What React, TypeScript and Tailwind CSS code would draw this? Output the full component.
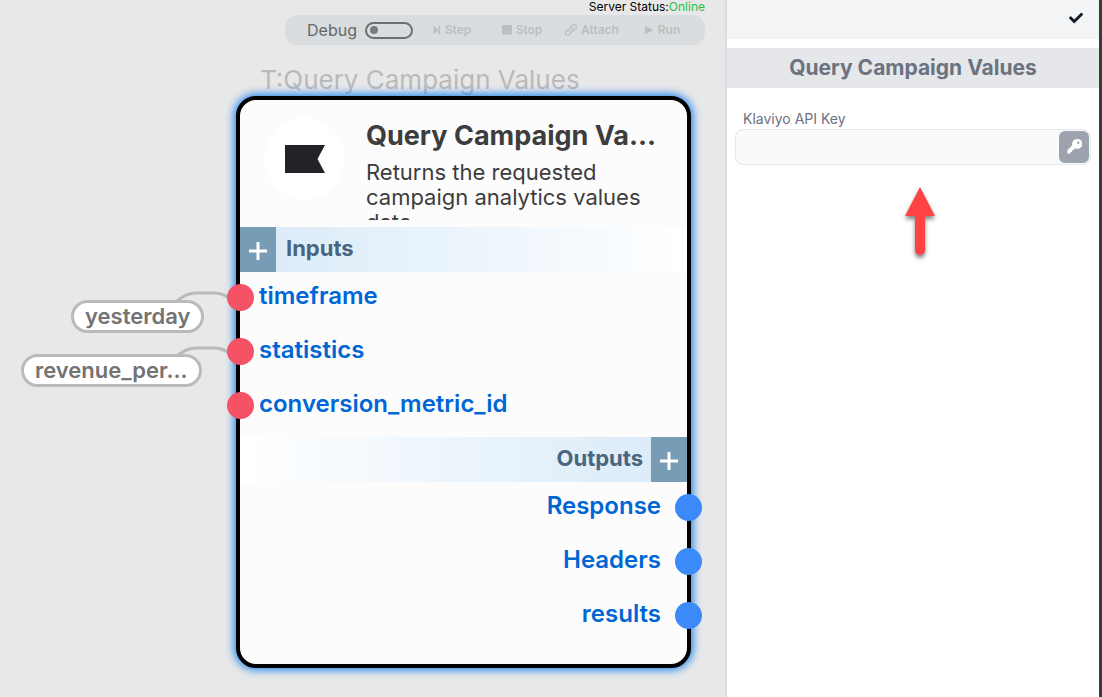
import { useState } from "react";
import type { ReactNode } from "react";
import { FaCheck, FaKey } from "react-icons/fa";

const inputs = ["timeframe", "statistics", "conversion_metric_id"];
const outputs = ["Response", "Headers", "results"];

function ToolButton({ icon, label }: { icon: ReactNode; label: string }) {
  return (
    <button type="button" disabled className="flex w-[70px] items-center justify-center gap-1 text-xs font-semibold text-[#bcbebf]">
      {icon}
      {label}
    </button>
  );
}

function Toolbar() {
  const [debug, setDebug] = useState(false);
  return (
    <header className="ml-auto flex w-[420px] flex-col">
      <p className="flex h-[14px] items-center justify-end text-xs text-black">
        Server Status:<span className="text-[#1fc14a]">Online</span>
      </p>
      <div className="mt-px flex h-[30px] items-center justify-between rounded-[12px] bg-[#d9dde0] pr-2 pl-[22px]">
        <label className="flex items-center gap-2 text-base text-[#666]">
          Debug
          <input type="checkbox" checked={debug} onChange={() => setDebug(!debug)} className="peer sr-only" />
          <span className="flex h-[17px] w-12 items-center rounded-full border-2 border-[#6f6f6f] px-[3px] peer-checked:justify-end">
            <span className="size-2 rounded-full bg-[#7c7c7c]" />
          </span>
        </label>
        <div className="flex">
          <ToolButton
            label="Step"
            icon={
              <svg viewBox="0 0 8 10" className="h-[10px] w-2" fill="currentColor">
                <path d="M0.500 0.500 5.500 5 0.500 9.500ZM5.500 0.500H7.100V9.500H5.500Z" />
              </svg>
            }
          />
          <ToolButton
            label="Stop"
            icon={
              <svg viewBox="0 0 10 10" className="size-[10px]" fill="currentColor">
                <path d="M0 0H10V9.500H0Z" />
              </svg>
            }
          />
          <ToolButton
            label="Attach"
            icon={
              <svg viewBox="0 0 12 12" className="size-3" fill="none" stroke="currentColor" strokeWidth="1.200" strokeLinecap="round">
                <path d="M5 8A2.300 2.300 0 0 1 4.700 4.700L7.600 1.500A2.200 2.200 0 0 1 10.900 4.600L8.800 6.800M7 4A2.300 2.300 0 0 1 7.300 7.300L4.400 10.500A2.200 2.200 0 0 1 1.100 7.400L3.200 5.200" />
              </svg>
            }
          />
          <ToolButton
            label="Run"
            icon={
              <svg viewBox="0 0 10 10" className="size-[10px]" fill="currentColor">
                <path d="M1 0.500 9 5 1 9.500Z" />
              </svg>
            }
          />
        </div>
      </div>
    </header>
  );
}

function AddButton({ label }: { label: string }) {
  return (
    <button type="button" aria-label={label} className="flex w-9 items-center justify-center bg-[#789bb6] pt-[3px] text-white">
      <svg viewBox="0 0 18 18" className="size-[18px]" fill="none" stroke="currentColor" strokeWidth="3">
        <path d="M9 0V18M0 9H18" />
      </svg>
    </button>
  );
}

function ValuePill({ children, className }: { children: ReactNode; className: string }) {
  return (
    <div className={`absolute flex h-[33px] items-center rounded-full border-[3px] border-[#bababa] bg-white px-[11px] text-[22px] font-semibold text-[#737373] ${className}`}>
      {children}
    </div>
  );
}

function Wire({ className }: { className: string }) {
  return (
    <svg viewBox="0 0 54 14" className={`absolute h-[14px] w-[54px] ${className}`} fill="none" stroke="#bababa" strokeWidth="3">
      <path d="M1 10C8 4 13 2 20 2H37C44 2 48 3 53 7" />
    </svg>
  );
}

function NodeCard() {
  return (
    <section className="absolute top-24 left-[236px] flex h-[572px] w-[455px] flex-col rounded-[20px] border-4 border-black bg-[#fcfcfc] shadow-[0_0_8px_2px_#1c86ee]">
      <div className="flex h-[127px] shrink-0 pt-[18px] pl-6">
        <div className="flex size-[81px] shrink-0 items-center justify-center rounded-full bg-white">
          <svg viewBox="0 0 40 28" className="h-7 w-10" fill="#222326">
            <path d="M0 0H40L32.500 14L40 28H0Z" />
          </svg>
        </div>
        <div className="ml-[21px] h-[102px] w-[294px] overflow-hidden text-[#3d3d3d]">
          <h2 className="truncate text-[27px] leading-9 font-bold">Query Campaign Values</h2>
          <p className="mt-[6px] text-[22px] leading-[25px]">Returns the requested campaign analytics values data</p>
        </div>
      </div>
      <div className="flex h-[45px] shrink-0 bg-linear-to-r from-[#d8eaf8] to-white">
        <AddButton label="Add input" />
        <h3 className="pt-[5px] pl-[10px] text-[22px] leading-8 font-bold text-[#4a6580]">Inputs</h3>
      </div>
      <ul className="-ml-[13px] flex flex-col gap-1 pb-[7px]">
        {inputs.map((name) => (
          <li key={name} className="flex h-[50px] items-center gap-[5px] text-2xl font-semibold text-[#0066d6]">
            <span className="size-[27px] rounded-full bg-[#f55266]" />
            <span className="pb-[2px]">{name}</span>
          </li>
        ))}
      </ul>
      <div className="flex h-[45px] shrink-0 justify-end bg-linear-to-l from-[#d8eaf8] to-white">
        <h3 className="pt-[5px] pr-2 text-[22px] leading-8 font-bold text-[#4a6580]">Outputs</h3>
        <AddButton label="Add output" />
      </div>
      <ul className="-mr-[15px] flex flex-col gap-1">
        {outputs.map((name) => (
          <li key={name} className="flex h-[50px] items-center justify-end gap-[14px] text-2xl font-semibold text-[#0066d6]">
            <span className="pb-[2px]">{name}</span>
            <span className="size-[27px] rounded-full bg-[#3c8afa]" />
          </li>
        ))}
      </ul>
    </section>
  );
}

function SidePanel() {
  return (
    <aside className="flex w-[377px] shrink-0 flex-col border-r-[3px] border-l-2 border-r-[#393c3a] border-l-[#d9dce3] bg-white">
      <div className="flex h-[39px] items-center justify-end bg-[#f3f4f6] pr-4 pb-1">
        <button type="button" aria-label="Apply" className="text-[#111827]">
          <FaCheck className="size-[14px]" />
        </button>
      </div>
      <h2 className="mt-[9px] bg-[#e5e7eb] text-center text-[21px] leading-10 font-bold text-[#6b7280]">Query Campaign Values</h2>
      <div className="flex flex-col px-2 pt-[21px]">
        <label htmlFor="api-key" className="pl-2 text-sm text-[#6b7280]">
          Klaviyo API Key
        </label>
        <div className="flex h-9 items-center rounded-lg border border-[#e5e7eb] bg-[#f9fafb] pr-px">
          <input id="api-key" type="text" className="h-full min-w-0 flex-1 bg-transparent px-2 text-sm outline-none" />
          <button type="button" aria-label="Choose a key" className="flex h-8 w-[30px] items-center justify-center rounded-md bg-[#9ca3af] pb-[2px] text-white">
            <svg viewBox="0 0 15 15" className="size-[15px]" fill="currentColor" fillRule="evenodd">
              <path d="M10 0A4.900 4.900 0 0 0 5.300 6.300L0.400 11.200V14.600H3.400V12.900H5.200V11.100H6.500L8.300 9.300A4.900 4.900 0 1 0 10 0ZM11.300 2.500A1.200 1.200 0 1 1 11.300 4.900A1.200 1.200 0 1 1 11.300 2.500Z" />
            </svg>
          </button>
        </div>
      </div>
      <svg viewBox="0 0 40 80" className="mt-[17px] ml-[173px] h-20 w-10 drop-shadow-[0_3px_2px_rgba(0,0,0,0.5)]" fill="#ff4242">
        <path d="M20 5 35 34H25V68A5 5 0 0 1 15 68V34H5Z" />
      </svg>
    </aside>
  );
}

export default function App() {
  return (
    <div className="flex min-h-screen font-['Inter',sans-serif]">
      <main className="relative min-w-0 flex-1 overflow-hidden bg-[#e8e8e8] pr-5">
        <Toolbar />
        <h1 className="absolute top-16 left-[260px] text-[26px] leading-8 whitespace-nowrap text-[#bababa]">T:Query Campaign Values</h1>
        <Wire className="top-[291px] left-[176px]" />
        <Wire className="top-[346px] left-[176px]" />
        <ValuePill className="top-[300px] left-[71px]">yesterday</ValuePill>
        <ValuePill className="top-[354px] left-[21px]">revenue_per…</ValuePill>
        <NodeCard />
      </main>
      <SidePanel />
    </div>
  );
}
